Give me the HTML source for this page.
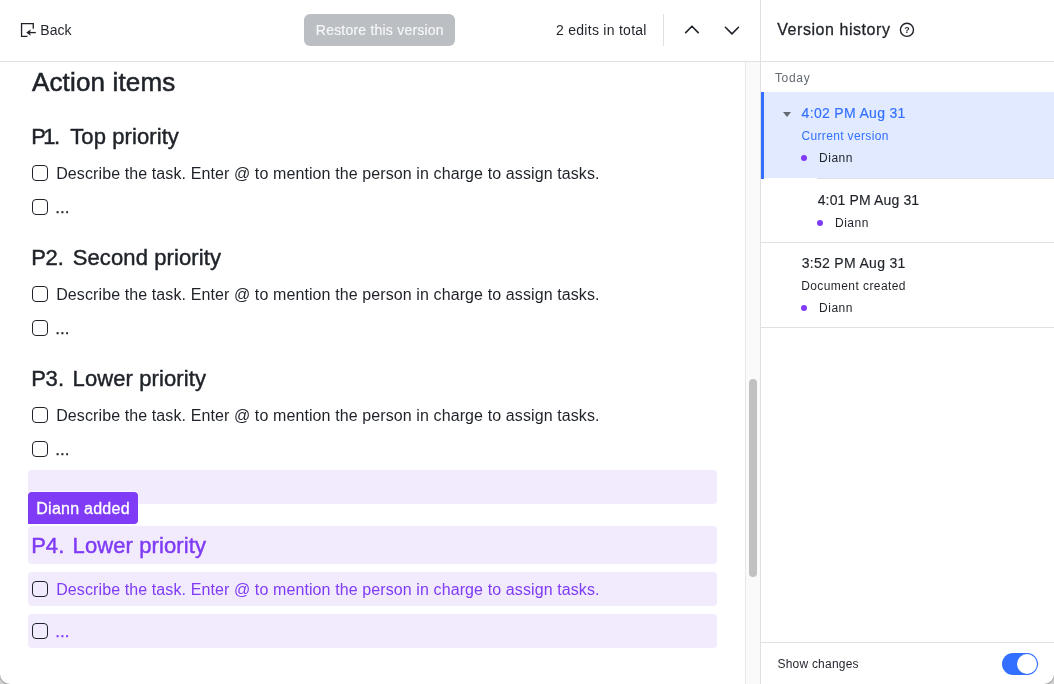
<!DOCTYPE html>
<html lang="en"><head><meta charset="utf-8"><title>Version history</title>
<style>
html,body{margin:0;padding:0;}
body{width:1054px;height:684px;position:relative;overflow:hidden;background:#fff;font-family:"Liberation Sans",sans-serif;color:#1f2329;}
.t{position:absolute;white-space:pre;margin:0;padding:0;font-weight:normal;font-family:inherit;border:0;background:none;}
.abs{position:absolute;}
.hl{position:absolute;left:28px;width:689px;background:#f2ebfe;border-radius:4px;}
.cb{position:absolute;left:32px;width:13.6px;height:13.6px;border:1.2px solid #1f2329;border-radius:4px;}
.line{position:absolute;background:#dee0e3;}
</style></head><body>
<div id="app" style="position:absolute;left:0;top:0;width:1054px;height:684px;will-change:transform;">

<div class="abs" style="left:0;top:0;width:1054px;height:684px;background:#d0d0d0;"></div>
<div class="abs" style="left:0;top:0;width:1054px;height:684px;background:#fff;border-radius:0 0 10px 10px;box-shadow:0 0 0 1px #a6a6a6;"></div>
<header>
<div class="line" style="left:0;top:61px;width:1054px;height:1px;"></div>
<div class="line" style="left:760px;top:0;width:1px;height:684px;"></div>
<svg class="abs" style="left:20px;top:22px" width="18" height="16" viewBox="20 22 18 16" fill="none">
<path d="M33.25 28.8V23.65H21.55V36.35H27.5" stroke="#1f2329" stroke-width="1.3"/>
<path d="M28 32.6H35.8" stroke="#1f2329" stroke-width="1.3"/>
<path d="M26.2 32.6L30.7 29.4Q29.5 32.6 30.7 35.8Z" fill="#1f2329"/>
</svg>
<div class="t" style="left:40.33px;top:20px;font-size:14px;line-height:20px;letter-spacing:0.033px;">Back</div>
<div class="abs" style="left:304px;top:14px;width:151px;height:32px;border-radius:6px;background:#bbbfc4;"></div>
<div class="t" style="left:315.82px;top:20px;font-size:14px;line-height:20px;letter-spacing:0.213px;color:#f7f8f9;-webkit-text-stroke:0.15px #f7f8f9;">Restore this version</div>
<div class="t" style="left:556.00px;top:20px;font-size:14px;line-height:20px;letter-spacing:0.272px;">2 edits in total</div>
<div class="line" style="left:663px;top:14px;width:1px;height:32px;"></div>
<svg class="abs" style="left:680px;top:20px" width="70" height="20" viewBox="680 20 70 20" fill="none" stroke="#1f2329" stroke-width="1.6" stroke-linecap="round" stroke-linejoin="round">
<path d="M685.7 32.6L691.95 26.2L698.2 32.6"/>
<path d="M725.4 27.3L731.95 33.9L738.5 27.3"/>
</svg>
</header>
<main>
<div class="abs" style="left:745px;top:62px;width:15px;height:622px;background:#fafafa;border-left:1px solid #e8e8e8;box-sizing:border-box;"></div>
<div class="abs" style="left:749px;top:379px;width:8px;height:198px;border-radius:4px;background:#c1c1c1;"></div>
<h1 class="t" style="left:31.93px;top:64px;font-size:26px;line-height:36px;letter-spacing:0.161px;-webkit-text-stroke:0.55px #1f2329;">Action items</h1>
<h2 class="t" style="left:31.18px;top:121px;font-size:22px;line-height:31px;-webkit-text-stroke:0.45px #1f2329;"><span style="letter-spacing:-2.674px">P</span><span style="letter-spacing:-1.324px">1</span><span style="letter-spacing:1.968px">. </span><span style="letter-spacing:0.089px">Top priority</span></h2>
<div class="cb" style="top:165px"></div>
<div class="t" style="left:56.20px;top:163px;font-size:16px;line-height:22px;letter-spacing:0.104px;">Describe the task. Enter @ to mention the person in charge to assign tasks.</div>
<div class="cb" style="top:199px"></div>
<div class="t" style="left:55.25px;top:196px;font-size:17px;line-height:24px;letter-spacing:0.038px;-webkit-text-stroke:0.25px #1f2329;">...</div>
<h2 class="t" style="left:31.18px;top:242px;font-size:22px;line-height:31px;-webkit-text-stroke:0.45px #1f2329;"><span style="letter-spacing:-0.474px">P</span><span style="letter-spacing:0.076px">2</span><span style="letter-spacing:1.368px">. </span><span style="letter-spacing:0.118px">Second priority</span></h2>
<div class="cb" style="top:286px"></div>
<div class="t" style="left:56.20px;top:284px;font-size:16px;line-height:22px;letter-spacing:0.104px;">Describe the task. Enter @ to mention the person in charge to assign tasks.</div>
<div class="cb" style="top:320px"></div>
<div class="t" style="left:55.25px;top:317px;font-size:17px;line-height:24px;letter-spacing:0.038px;-webkit-text-stroke:0.25px #1f2329;">...</div>
<h2 class="t" style="left:31.18px;top:363px;font-size:22px;line-height:31px;-webkit-text-stroke:0.45px #1f2329;"><span style="letter-spacing:-0.261px">P</span><span style="letter-spacing:0.264px">3</span><span style="letter-spacing:1.143px">. </span><span style="letter-spacing:0.104px">Lower priority</span></h2>
<div class="cb" style="top:407px"></div>
<div class="t" style="left:56.20px;top:405px;font-size:16px;line-height:22px;letter-spacing:0.104px;">Describe the task. Enter @ to mention the person in charge to assign tasks.</div>
<div class="cb" style="top:441px"></div>
<div class="t" style="left:55.25px;top:438px;font-size:17px;line-height:24px;letter-spacing:0.038px;-webkit-text-stroke:0.25px #1f2329;">...</div>
<div class="hl" style="top:470px;height:34px;"></div>
<div class="abs" style="left:28px;top:492px;width:110px;height:32px;background:#7f3bf5;border-radius:4px 4px 4px 0;box-shadow:0 -1px 0 rgba(255,255,255,.5);"></div>
<div class="t" style="left:36.30px;top:498px;font-size:16px;line-height:22px;letter-spacing:0.250px;color:#ffffff;-webkit-text-stroke:0.3px #ffffff;">Diann added</div>
<div class="hl" style="top:526px;height:38px;"></div>
<div class="hl" style="top:572px;height:34px;"></div>
<div class="hl" style="top:614px;height:34px;"></div>
<h2 class="t" style="left:31.18px;top:530px;font-size:22px;line-height:31px;-webkit-text-stroke:0.45px #7f3bf5;color:#7f3bf5;"><span style="letter-spacing:-0.161px">P</span><span style="letter-spacing:0.364px">4</span><span style="letter-spacing:1.043px">. </span><span style="letter-spacing:0.104px">Lower priority</span></h2>
<div class="cb" style="top:581px"></div>
<div class="t" style="left:56.20px;top:579px;font-size:16px;line-height:22px;letter-spacing:0.104px;color:#7f3bf5;">Describe the task. Enter @ to mention the person in charge to assign tasks.</div>
<div class="cb" style="top:623px"></div>
<div class="t" style="left:55.25px;top:620px;font-size:17px;line-height:24px;letter-spacing:0.038px;color:#7f3bf5;-webkit-text-stroke:0.25px #7f3bf5;">...</div>
</main>
<aside>
<h2 class="t" style="left:777.23px;top:19px;font-size:16px;line-height:22px;letter-spacing:0.552px;-webkit-text-stroke:0.3px #1f2329;">Version history</h2>
<svg class="abs" style="left:899px;top:22px" width="16" height="16" viewBox="0 0 16 16" fill="none">
<circle cx="7.95" cy="7.85" r="6.55" stroke="#1f2329" stroke-width="1.4"/>
<text x="8" y="10.9" font-family="Liberation Sans, sans-serif" font-size="9" font-weight="bold" fill="#1f2329" text-anchor="middle">?</text>
</svg>
<div class="t" style="left:774.90px;top:70px;font-size:12px;line-height:17px;letter-spacing:0.712px;color:#646a73;">Today</div>
<div class="abs" style="left:761px;top:92px;width:293px;height:86px;background:#e1eaff;"></div>
<div class="abs" style="left:761px;top:92px;width:3px;height:87px;background:#3370ff;"></div>
<div class="line" style="left:817px;top:178px;width:237px;height:1px;"></div>
<svg class="abs" style="left:783px;top:112px" width="8" height="5" viewBox="0 0 8 5"><path d="M0 0H8L4 5Z" fill="#646a73"/></svg>
<div class="t" style="left:801.60px;top:103px;font-size:14px;line-height:20px;letter-spacing:0.319px;color:#3370ff;-webkit-text-stroke:0.15px #3370ff;">4:02 PM Aug 31</div>
<div class="t" style="left:801.43px;top:128px;font-size:12px;line-height:17px;letter-spacing:0.355px;color:#3370ff;">Current version</div>
<div class="abs" style="left:801.2px;top:155px;width:6px;height:6px;border-radius:50%;background:#7f3bf5;"></div>
<div class="t" style="left:819.05px;top:150px;font-size:12px;line-height:17px;letter-spacing:0.500px;">Diann</div>
<div class="t" style="left:817.70px;top:190px;font-size:14px;line-height:20px;letter-spacing:0.142px;-webkit-text-stroke:0.15px #1f2329;">4:01 PM Aug 31</div>
<div class="abs" style="left:817px;top:220px;width:6px;height:6px;border-radius:50%;background:#7f3bf5;"></div>
<div class="t" style="left:835.05px;top:215px;font-size:12px;line-height:17px;letter-spacing:0.475px;">Diann</div>
<div class="line" style="left:761px;top:242px;width:293px;height:1px;"></div>
<div class="t" style="left:801.65px;top:253px;font-size:14px;line-height:20px;letter-spacing:0.315px;-webkit-text-stroke:0.15px #1f2329;">3:52 PM Aug 31</div>
<div class="t" style="left:801.15px;top:278px;font-size:12px;line-height:17px;letter-spacing:0.423px;">Document created</div>
<div class="abs" style="left:801.2px;top:305px;width:6px;height:6px;border-radius:50%;background:#7f3bf5;"></div>
<div class="t" style="left:819.05px;top:300px;font-size:12px;line-height:17px;letter-spacing:0.500px;">Diann</div>
<div class="line" style="left:761px;top:327px;width:293px;height:1px;"></div>
<div class="line" style="left:761px;top:642px;width:293px;height:1px;"></div>
<div class="t" style="left:777.45px;top:656px;font-size:12px;line-height:17px;letter-spacing:0.220px;">Show changes</div>
<div class="abs" style="left:1002px;top:653px;width:36px;height:22px;border-radius:11px;background:#3370ff;"></div>
<div class="abs" style="left:1017px;top:654px;width:20px;height:20px;border-radius:50%;background:#fff;"></div>
</aside>
</div>
</body></html>
